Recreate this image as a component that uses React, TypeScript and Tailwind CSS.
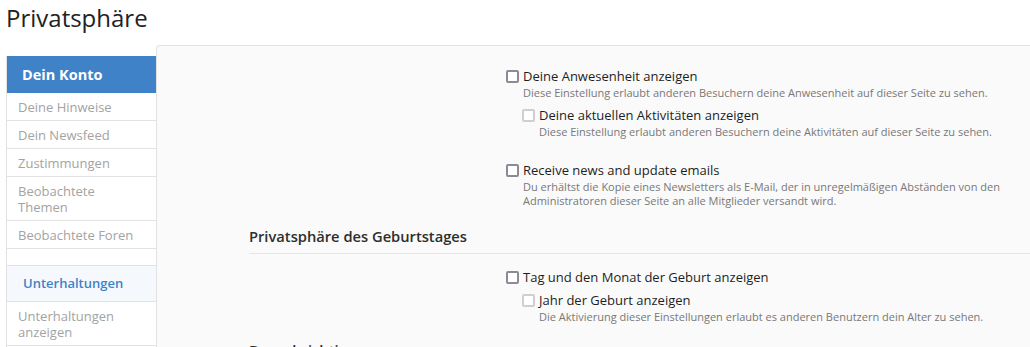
import React from 'react';

const NAV: Array<{ label: string; kind?: 'spacer' | 'group' }> = [
  { label: 'Deine Hinweise' },
  { label: 'Dein Newsfeed' },
  { label: 'Zustimmungen' },
  { label: 'Beobachtete Themen' },
  { label: 'Beobachtete Foren' },
  { label: '', kind: 'spacer' },
  { label: 'Unterhaltungen', kind: 'group' },
  { label: 'Unterhaltungen anzeigen' },
];

function Box({ disabled }: { disabled?: boolean }) {
  return (
    <span
      className={
        'mt-[2.5px] block size-[13px] shrink-0 rounded-[2px] border-2 bg-white ' +
        (disabled ? 'border-[#cfcfd2]' : 'border-[#8c8a96]')
      }
    />
  );
}

function Option({
  label,
  hint,
  disabled,
  className = '',
}: {
  label: string;
  hint?: React.ReactNode;
  disabled?: boolean;
  className?: string;
}) {
  return (
    <div className={className}>
      <label className="flex gap-[4px] text-[13px] leading-[18px] text-[#1e1e1e]">
        <Box disabled={disabled} />
        <span>{label}</span>
      </label>
      {hint && <div className="mt-[1px] pl-[17px] text-[11px] leading-[14px] text-[#787878]">{hint}</div>}
    </div>
  );
}

export default function App() {
  return (
    <div className="h-[347px] w-[1030px] overflow-hidden bg-white font-['Open_Sans',sans-serif]">
      <h1 className="pl-[6px] pt-[3px] text-[24px] leading-[30px] text-[#222]">Privatsphäre</h1>
      <div className="mt-[12px] flex pl-[6px]">
        <aside className="mt-[11px] w-[150px] shrink-0 border-l border-[#e2e2e2]">
          <div className="flex h-[37px] items-center bg-[#3f82c7] pl-[15px] pt-[1px] text-[14.5px] font-bold text-white">
            Dein Konto
          </div>
          {NAV.map((item, i) =>
            item.kind === 'spacer' ? (
              <div key={i} className="h-[17px] border-b border-[#e2e2e2]" />
            ) : item.kind === 'group' ? (
              <div
                key={i}
                className="flex h-[36px] items-center border-b border-[#e2e2e2] bg-[#f5f9fd] pl-[16px] text-[13px] font-semibold text-[#3f82c7]"
              >
                {item.label}
              </div>
            ) : (
              <div
                key={i}
                className="border-b border-[#e2e2e2] pb-[5px] pl-[11px] pr-[18px] pt-[6px] text-[13px] leading-[16px] text-[#a3a3a3]"
              >
                {item.label}
              </div>
            ),
          )}
        </aside>
        <main className="min-h-[400px] flex-1 rounded-tl-[4px] border-l border-t border-[#e2e2e2] bg-[#fafafa] pl-[92px] pt-[21px]">
          <div className="ml-[257px]">
            <Option
              label="Deine Anwesenheit anzeigen"
              hint="Diese Einstellung erlaubt anderen Besuchern deine Anwesenheit auf dieser Seite zu sehen."
            />
            <Option
              className="mt-[6px] ml-[16px]"
              disabled
              label="Deine aktuellen Aktivitäten anzeigen"
              hint="Diese Einstellung erlaubt anderen Besuchern deine Aktivitäten auf dieser Seite zu sehen."
            />
            <Option
              className="mt-[22px]"
              label="Receive news and update emails"
              hint={
                <>
                  Du erhältst die Kopie eines Newsletters als E-Mail, der in unregelmäßigen Abständen von den
                  <br />
                  Administratoren dieser Seite an alle Mitglieder versandt wird.
                </>
              }
            />
          </div>
          <h3 className="mt-[18px] border-b border-[#e6e6e6] pb-[7px] text-[14.7px] font-semibold leading-[20px] text-[#2e2e2e]">
            Privatsphäre des Geburtstages
          </h3>
          <div className="ml-[257px] mt-[14px]">
            <Option label="Tag und den Monat der Geburt anzeigen" />
            <Option
              className="mt-[5px] ml-[16px]"
              disabled
              label="Jahr der Geburt anzeigen"
              hint="Die Aktivierung dieser Einstellungen erlaubt es anderen Benutzern dein Alter zu sehen."
            />
          </div>
          <h3 className="mt-[16px] border-b border-[#e6e6e6] pb-[7px] text-[14.7px] font-semibold leading-[20px] text-[#2e2e2e]">
            Benachrichtigungen
          </h3>
        </main>
      </div>
    </div>
  );
}
